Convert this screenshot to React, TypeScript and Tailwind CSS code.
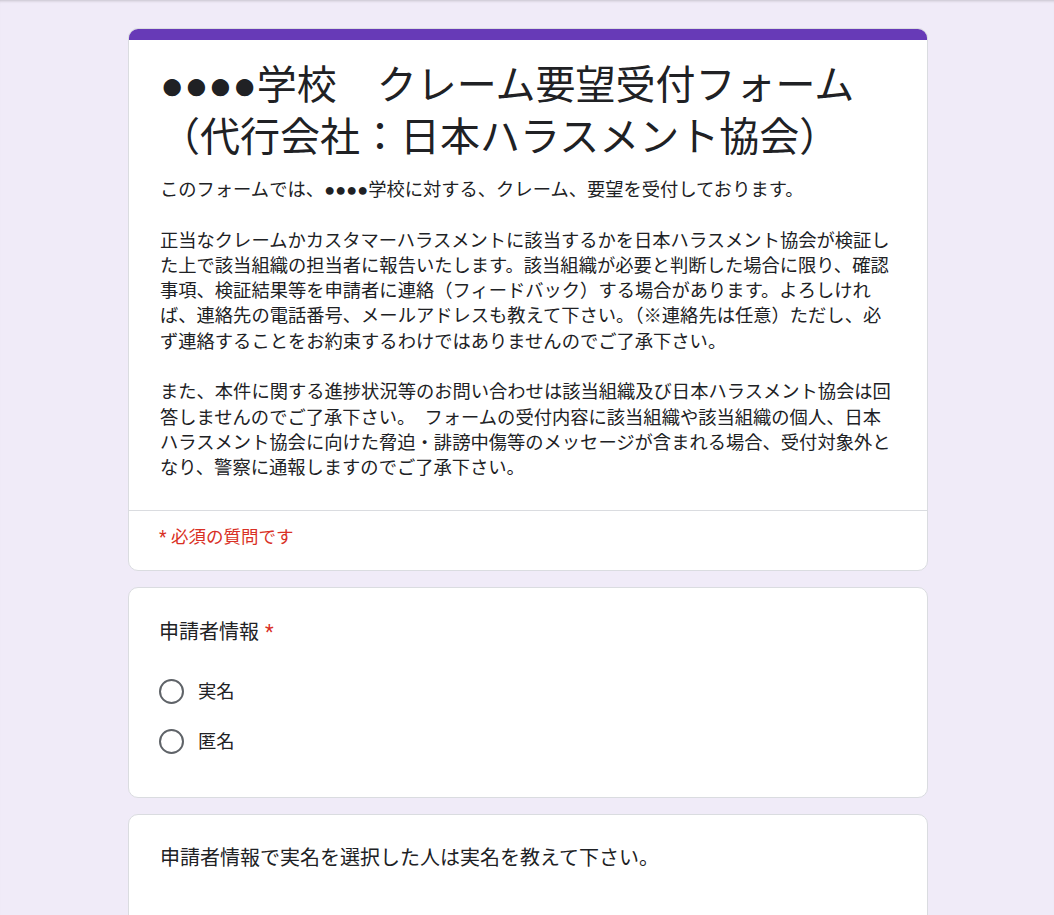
import React from "react";

const FONT = 'Roboto, "Liberation Sans", "Noto Sans CJK JP", sans-serif';

function Radio({ label }: { label: string }) {
  return (
    <div className="flex items-center h-[50px]">
      <div className="w-[25px] h-[25px] rounded-full border-2 border-[#5f6368] shrink-0" />
      <span className="ml-[14px] text-[18.3px] leading-[24px] text-[#202124]">{label}</span>
    </div>
  );
}

export default function App() {
  const p2 = [
    "正当なクレームかカスタマーハラスメントに該当するかを日本ハラスメント協会が検証し",
    "た上で該当組織の担当者に報告いたします。該当組織が必要と判断した場合に限り、確認",
    "事項、検証結果等を申請者に連絡（フィードバック）する場合があります。よろしけれ",
    "ば、連絡先の電話番号、メールアドレスも教えて下さい。（※連絡先は任意）ただし、必",
    "ず連絡することをお約束するわけではありませんのでご了承下さい。",
  ];
  const p3 = [
    "また、本件に関する進捗状況等のお問い合わせは該当組織及び日本ハラスメント協会は回",
    "答しませんのでご了承下さい。　フォームの受付内容に該当組織や該当組織の個人、日本",
    "ハラスメント協会に向けた脅迫・誹謗中傷等のメッセージが含まれる場合、受付対象外と",
    "なり、警察に通報しますのでご了承下さい。",
  ];
  return (
    <div
      className="min-h-screen bg-[#f0ebf8] pt-[28px] pb-[40px] shadow-[inset_0_3px_3px_-2px_rgba(0,0,0,0.18)]"
      style={{ fontFamily: FONT }}
    >
      <div className="w-[800px] ml-[128px] flex flex-col gap-[16px]">
        {/* Header card */}
        <div className="rounded-[10px] bg-white border border-[#dadce0] overflow-hidden">
          <div className="h-[12px] bg-[#673ab7] -mx-px -mt-px" />
          <div className="px-[31px] pt-[20px] pb-[29px] text-[#202124]">
            <h1 className="text-[40px] leading-[52px] font-normal whitespace-nowrap">
              ●●●●学校　クレーム要望受付フォーム
              <br />
              （代行会社：日本ハラスメント協会）
            </h1>
            <div className="mt-[13px] text-[18.3px] leading-[25.3px] whitespace-nowrap">
              <div>このフォームでは、●●●●学校に対する、クレーム、要望を受付しております。</div>
              <div className="h-[25.3px]" />
              {p2.map((l) => (
                <div key={l}>{l}</div>
              ))}
              <div className="h-[25.3px]" />
              {p3.map((l) => (
                <div key={l}>{l}</div>
              ))}
            </div>
          </div>
          <div className="border-t border-[#dadce0] px-[30px] pt-[16px] pb-[23px] text-[17.5px] leading-[20px] text-[#d93025]">
            * 必須の質問です
          </div>
        </div>

        {/* Question 1 */}
        <div className="rounded-[10px] bg-white border border-[#dadce0] px-[30px] pt-[30px] pb-[30px]">
          <div className="text-[20px] leading-[28px] text-[#202124]">
            申請者情報<span className="text-[#d93025] ml-[6px]">*</span>
          </div>
          <div className="mt-[21px] flex flex-col">
            <Radio label="実名" />
            <Radio label="匿名" />
          </div>
        </div>

        {/* Question 2 */}
        <div className="rounded-[10px] bg-white border border-[#dadce0] px-[31px] pt-[29px] pb-[120px]">
          <div className="text-[20px] leading-[28px] text-[#202124]">
            申請者情報で実名を選択した人は実名を教えて下さい。
          </div>
        </div>
      </div>
    </div>
  );
}
